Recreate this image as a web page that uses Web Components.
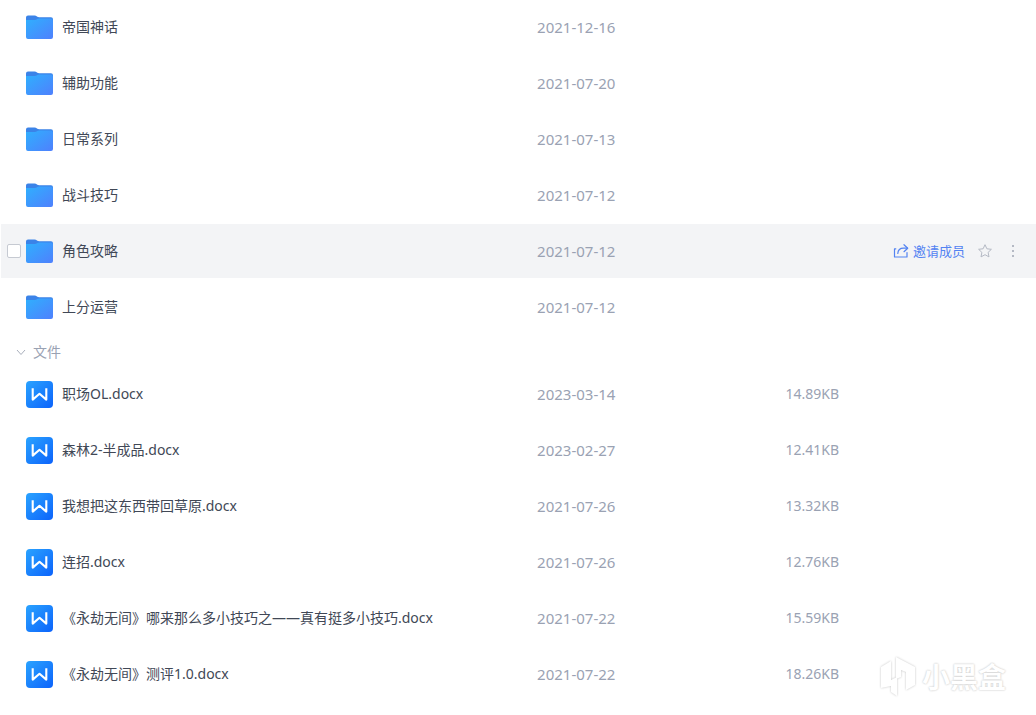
<!DOCTYPE html>
<html lang="zh-CN">
<head>
<meta charset="utf-8">
<meta name="viewport" content="width=device-width, initial-scale=1">
<title>文件列表</title>
<style>
  body {
    margin: 0;
    background: #fff;
    color: #414856;
    font: 14px/20px "Noto Sans", "Noto Sans CJK SC", sans-serif;
  }
</style>
</head>
<body>
<drive-page>
  <file-list label="文件夹">
    <drive-item kind="folder" name="帝国神话" date="2021-12-16"></drive-item>
    <drive-item kind="folder" name="辅助功能" date="2021-07-20"></drive-item>
    <drive-item kind="folder" name="日常系列" date="2021-07-13"></drive-item>
    <drive-item kind="folder" name="战斗技巧" date="2021-07-12"></drive-item>
    <drive-item kind="folder" name="角色攻略" date="2021-07-12" active></drive-item>
    <drive-item kind="folder" name="上分运营" date="2021-07-12"></drive-item>
  </file-list>
  <section-toggle>文件</section-toggle>
  <file-list label="文件">
    <drive-item kind="doc" name="职场OL.docx" date="2023-03-14" size="14.89KB"></drive-item>
    <drive-item kind="doc" name="森林2-半成品.docx" date="2023-02-27" size="12.41KB"></drive-item>
    <drive-item kind="doc" name="我想把这东西带回草原.docx" date="2021-07-26" size="13.32KB"></drive-item>
    <drive-item kind="doc" name="连招.docx" date="2021-07-26" size="12.76KB"></drive-item>
    <drive-item kind="doc" name="《永劫无间》哪来那么多小技巧之——真有挺多小技巧.docx" date="2021-07-22" size="15.59KB"></drive-item>
    <drive-item kind="doc" name="《永劫无间》测评1.0.docx" date="2021-07-22" size="18.26KB"></drive-item>
  </file-list>
  <brand-mark slot="mark">小黑盒</brand-mark>
</drive-page>

<script>
class DrivePage extends HTMLElement {
  constructor() {
    super();
    this.attachShadow({ mode: 'open' }).innerHTML = `
      <style>
        :host { display: block; position: relative; min-height: 100vh; }
        main { padding-left: 1px; }
        ::slotted(brand-mark) { position: absolute; right: 30px; bottom: 16px; }
      </style>
      <main><slot></slot></main>
      <slot name="mark"></slot>`;
  }
}

/* Holds one entry's data; file-list draws it as a table row. */
class DriveItem extends HTMLElement {
  constructor() {
    super();
    this.attachShadow({ mode: 'open' }).innerHTML = `<style>:host { display: none; }</style>`;
  }
}

class FileIcon extends HTMLElement {
  constructor() {
    super();
    this.attachShadow({ mode: 'open' });
  }
  connectedCallback() {
    const folder = `
      <svg viewBox="0 0 27 27" aria-hidden="true">
        <defs><linearGradient id="g" x1="0" y1="0" x2="1" y2="1">
          <stop offset="0" stop-color="#2fb0fe"/><stop offset="1" stop-color="#4f80fd"/>
        </linearGradient></defs>
        <path d="M2 1.5H8.5C10.800 1.5 11.300 3.300 13.300 3.300H25Q27 3.300 27 5.300V12H0V3.500Q0 1.500 2 1.500Z" fill="#3b83e8"/>
        <path d="M0 6H8.800C10.800 6 11.200 4.500 13.200 4.500H25Q27 4.500 27 6.500V23Q27 25 25 25H2Q0 25 0 23Z" fill="url(#g)"/>
      </svg>`;
    const doc = `
      <svg viewBox="0 0 27 27" aria-hidden="true">
        <defs><linearGradient id="g" x1="0" y1="0" x2="1" y2="1">
          <stop offset="0" stop-color="#2aa3ff"/><stop offset="1" stop-color="#0c63fb"/>
        </linearGradient></defs>
        <rect width="27" height="27" rx="4" fill="url(#g)"/>
        <path d="M6.700 7.200V18.600L13.500 12.800L20.300 18.600V7.200" fill="none" stroke="#fff" stroke-width="2.100" stroke-linejoin="round"/>
      </svg>`;
    this.shadowRoot.innerHTML = `
      <style>
        :host { display: block; flex: none; width: 27px; height: 27px; }
        svg { display: block; width: 100%; height: 100%; }
      </style>${this.getAttribute('kind') === 'folder' ? folder : doc}`;
  }
}

class RowActions extends HTMLElement {
  constructor() {
    super();
    this.attachShadow({ mode: 'open' }).innerHTML = `
      <style>
        :host { display: flex; align-items: center; justify-content: flex-end; padding-right: 15px; }
        button { display: flex; align-items: center; border: 0; padding: 0; background: none; font: inherit; color: #b4b9c4; cursor: pointer; }
        svg { display: block; fill: none; stroke: currentColor; }
        .invite { gap: 4px; font-size: 13px; color: #5383f2; white-space: nowrap; }
        .star, .more { margin-left: 12px; }
      </style>
      <button class="invite" type="button">
        <svg width="16" height="16" viewBox="0 0 16 16" stroke-width="1.200" stroke-linejoin="round" stroke-linecap="round" aria-hidden="true">
          <path d="M2.800 5.800H1.500V14H14V9.500"/>
          <path d="M11 1.700L14.700 5.200L11 8.700"/>
          <path d="M14.500 5.200H10.500C7 5.200 5 7.200 4.800 10.500"/>
        </svg>邀请成员</button>
      <button class="star" type="button" aria-label="收藏">
        <svg width="16" height="16" viewBox="0 0 16 16" stroke-linejoin="round" aria-hidden="true">
          <path d="M8 1.700L9.900 5.800L14.400 6.300L11.100 9.400L12 13.900L8 11.700L4 13.900L4.900 9.400L1.600 6.300L6.100 5.800Z"/>
        </svg></button>
      <button class="more" type="button" aria-label="更多">
        <svg width="16" height="16" viewBox="0 0 16 16" aria-hidden="true">
          <g fill="currentColor" stroke="none"><rect x="7" y="2" width="2" height="2"/><rect x="7" y="7" width="2" height="2"/><rect x="7" y="12" width="2" height="2"/></g>
        </svg></button>`;
  }
}

class FileList extends HTMLElement {
  constructor() {
    super();
    this.attachShadow({ mode: 'open' });
  }
  connectedCallback() {
    const rows = [...this.querySelectorAll('drive-item')].map(item => {
      const name = item.getAttribute('name');
      const active = item.hasAttribute('active');
      return `
        <tr class="${active ? 'active' : ''}">
          <td class="pick">${active ? `<input type="checkbox" aria-label="${name}">` : ''}</td>
          <td><div class="name"><file-icon kind="${item.getAttribute('kind')}"></file-icon><span>${name}</span></div></td>
          <td class="date">${item.getAttribute('date')}</td>
          <td class="size">${item.getAttribute('size') || ''}</td>
          <td>${active ? '<row-actions></row-actions>' : ''}</td>
        </tr>`;
    }).join('');
    this.shadowRoot.innerHTML = `
      <style>
        :host { display: block; }
        table { width: 100%; table-layout: fixed; border-spacing: 0; }
        .c-pick { width: 25px; }
        .c-date { width: 24%; }
        .c-size { width: 10%; }
        .c-act { width: 147px; }
        td { box-sizing: border-box; height: 56px; padding: 0; border-bottom: 2px solid transparent; background-clip: padding-box; }
        .active td { background-color: #f3f4f6; }
        .pick { padding-left: 6px; }
        input { appearance: none; display: block; box-sizing: border-box; width: 14px; height: 14px; margin: 0; border: 1px solid #c6cad2; border-radius: 2px; background: #fff; }
        .name { display: flex; align-items: center; gap: 9px; white-space: nowrap; }
        .date, .size { color: #9aa2b3; }
        .date { font-size: 15px; }
      </style>
      <table aria-label="${this.getAttribute('label')}">
        <colgroup><col class="c-pick"><col><col class="c-date"><col class="c-size"><col class="c-act"></colgroup>
        <tbody>${rows}</tbody>
      </table>`;
  }
}

class SectionToggle extends HTMLElement {
  constructor() {
    super();
    this.attachShadow({ mode: 'open' }).innerHTML = `
      <style>
        :host { display: block; padding-left: 15px; }
        button { display: flex; align-items: center; gap: 7px; height: 31px; padding: 0; border: 0; background: none; font: inherit; color: #9aa2b3; cursor: pointer; }
        svg { display: block; }
      </style>
      <button type="button" aria-expanded="true">
        <svg width="10" height="10" viewBox="0 0 10 10" fill="none" stroke="#a9afbc" aria-hidden="true"><path d="M1 3L5 7.500L9 3"/></svg>
        <span><slot></slot></span>
      </button>`;
  }
}

class BrandMark extends HTMLElement {
  constructor() {
    super();
    this.attachShadow({ mode: 'open' }).innerHTML = `
      <style>
        :host { display: flex; align-items: center; gap: 6px; pointer-events: none; color: #fff;
          font-size: 28px; line-height: 44px; font-weight: 700; text-shadow: 0 0 2px #ccc, 0 0 2px #dedede; }
        svg { display: block; filter: drop-shadow(0 0 1px #c4c4c4); }
      </style>
      <svg width="36" height="42" viewBox="0 0 36 42" fill="#fff" aria-hidden="true">
        <path d="M1 11L11 5V24L17 21V40L11 36V30L1 32Z"/>
        <path d="M16 1L35 11V29L26 34V16L21 14V21L16 23Z"/>
      </svg>
      <span><slot></slot></span>`;
  }
}

customElements.define('drive-item', DriveItem);
customElements.define('file-icon', FileIcon);
customElements.define('row-actions', RowActions);
customElements.define('file-list', FileList);
customElements.define('section-toggle', SectionToggle);
customElements.define('brand-mark', BrandMark);
customElements.define('drive-page', DrivePage);
</script>
</body>
</html>
